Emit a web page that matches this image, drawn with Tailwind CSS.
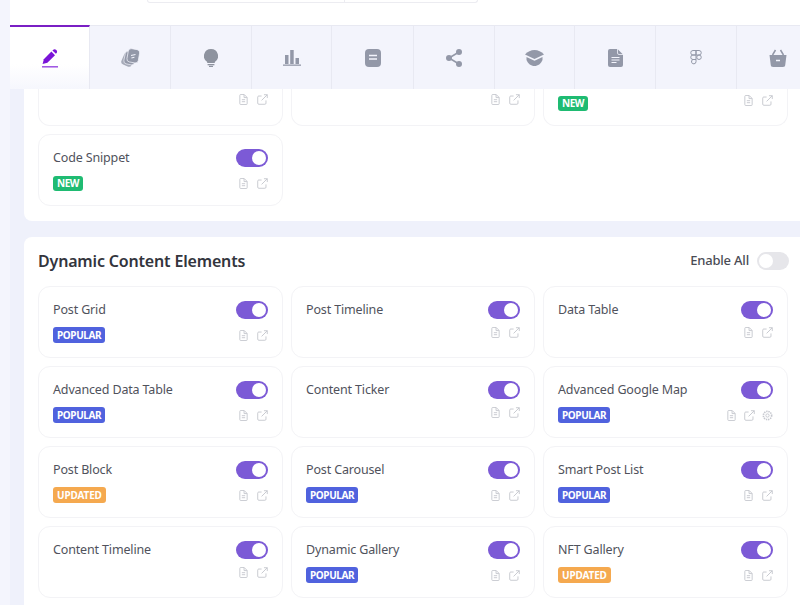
<!DOCTYPE html>
<html lang="en">
<head>
<meta charset="UTF-8">
<title>Elements</title>
<script src="https://cdn.jsdelivr.net/npm/@tailwindcss/browser@4"></script>
</head>
<body class="w-[800px] h-[605px] overflow-hidden bg-[#f4f5fd] font-['Noto_Sans',sans-serif]">
<svg class="hidden">
  <symbol id="doc" viewBox="0 0 12 12"><path d="M2 1.500a1 1 0 0 1 1-1h3.700L10 3.800V10.500a1 1 0 0 1-1 1H3a1 1 0 0 1-1-1z M6.600 .8V3.900H9.800 M4.200 6.200h3.600 M4.200 8.400h3.600" fill="none" stroke="currentColor" stroke-width="1"/></symbol>
  <symbol id="ext" viewBox="0 0 12 12"><path d="M9.800 7v3a1.200 1.200 0 0 1-1.200 1.200H2A1.200 1.200 0 0 1 .8 10V3.400A1.200 1.200 0 0 1 2 2.200h3 M5 7 11.200.8 M7.600.8h3.600v3.600" fill="none" stroke="currentColor" stroke-width="1"/></symbol>
</svg>
<div class="ml-[10px] w-[790px] h-[605px] bg-[#eff1fb] overflow-hidden">
  <!-- top bar -->
  <div class="h-[25px] bg-white">
    <div class="ml-[137px] w-[331px] h-[3px] border border-t-0 border-[#ececf1] rounded-b-lg flex">
      <div class="w-[197px] border-r border-[#ececf1]"></div>
    </div>
  </div>
  <!-- tabs -->
  <div class="flex h-[64px] w-[810px] bg-[#f3f4fc] border-t border-[#e8e9f2] text-[#9398a8]">
    <div class="w-[80px] shrink-0 flex items-center justify-center -mt-[1px] border-t-2 border-[#7a1fc4] bg-gradient-to-b from-white from-60% to-[#f6f7fd] border-r border-r-[#e8e9f2] text-[#7a14d8]">
      <svg width="16" height="19" viewBox="0 0 16 19" fill="currentColor"><path d="M.6 15 1.800 10.200 9.400 2.600 13 6.200 5.400 13.800z"/><path d="M10.400 1.600 11 1c1-1 2.300-1 3.300 0s1.100 2.300.1 3.300l-.5.500z"/><rect x="0" y="17.300" width="16" height="1.100"/></svg>
    </div>
    <div class="w-[81px] shrink-0 flex items-center justify-center border-r border-[#e8e9f2]">
      <svg width="19" height="19" viewBox="0 0 19 19"><rect x="1.500" y="5" width="11" height="13" rx="3" transform="rotate(24 7 11.500)" fill="currentColor" opacity=".8"/><rect x="3.500" y="3.500" width="11" height="13" rx="3" transform="rotate(12 9 10)" fill="currentColor" opacity=".9" stroke="#f3f4fc" stroke-width=".7"/><rect x="6.500" y="1" width="11.500" height="13.500" rx="3" transform="rotate(10 12 8)" fill="currentColor" stroke="#f3f4fc" stroke-width=".7"/><path d="M10 7.500l4.500-1M10.400 10l3-.7" stroke="#f3f4fc" stroke-width="1.100" fill="none"/></svg>
    </div>
    <div class="w-[81px] shrink-0 flex items-center justify-center border-r border-[#e8e9f2]">
      <svg width="14" height="18" viewBox="0 0 14 18" fill="#8e939f"><path d="M7 0a7 7 0 0 1 3.800 12.900V14H3.200v-1.100A7 7 0 0 1 7 0z"/><rect x="3.600" y="15" width="6.800" height="1.300"/><rect x="5" y="16.800" width="4" height="1.200"/></svg>
    </div>
    <div class="w-[80px] shrink-0 flex items-center justify-center border-r border-[#e8e9f2]">
      <svg width="18" height="17" viewBox="0 0 18 17" fill="currentColor"><rect x="2" y="6" width="3.500" height="9"/><rect x="7.200" y="1" width="3.500" height="14"/><rect x="12.500" y="9" width="3.500" height="6"/><rect x="0" y="15.500" width="18" height="1.300"/></svg>
    </div>
    <div class="w-[82px] shrink-0 flex items-center justify-center border-r border-[#e8e9f2]">
      <svg width="16" height="18" viewBox="0 0 16 18"><rect width="16" height="18" rx="4" fill="currentColor"/><path d="M4 6.500h8M4 10h8" stroke="#f3f4fc" stroke-width="1.400"/></svg>
    </div>
    <div class="w-[81px] shrink-0 flex items-center justify-center border-r border-[#e8e9f2]">
      <svg width="16" height="18" viewBox="0 0 16 18" fill="currentColor"><circle cx="13" cy="3" r="3"/><circle cx="3" cy="9" r="3"/><circle cx="13" cy="15" r="3"/><path d="M13 3 3 9l10 6" fill="none" stroke="currentColor" stroke-width="1.600"/></svg>
    </div>
    <div class="w-[80px] shrink-0 flex items-center justify-center border-r border-[#e8e9f2]">
      <svg width="19" height="16" viewBox="0 0 19 16" fill="currentColor"><path d="M9.500 0C13 0 16.500 1.500 19 4.500L9.500 9 0 4.500C2.500 1.500 6 0 9.500 0z"/><path d="M1.500 7l8 3.800 8-3.800v3C16 13.800 13 16 9.500 16S3 13.800 1.500 10z"/></svg>
    </div>
    <div class="w-[81px] shrink-0 flex items-center justify-center border-r border-[#e8e9f2]">
      <svg width="15" height="18" viewBox="0 0 15 18"><path d="M2 0h7.500L15 5.500V16a2 2 0 0 1-2 2H2a2 2 0 0 1-2-2V2a2 2 0 0 1 2-2z" fill="currentColor"/><path d="M9.500 0v4a1.500 1.500 0 0 0 1.500 1.500h4" fill="none" stroke="#f3f4fc" stroke-width=".8"/><path d="M3.500 8.500h8M3.500 11h8M3.500 13.500h5" stroke="#f3f4fc" stroke-width="1.200"/></svg>
    </div>
    <div class="w-[81px] shrink-0 flex items-center justify-center border-r border-[#e8e9f2]">
      <svg width="12" height="15" viewBox="0 0 12 15" fill="none" stroke="currentColor" stroke-width="1"><path d="M6 .5H3a2.250 2.250 0 0 0 0 4.500h3z"/><path d="M6 .5h3A2.250 2.250 0 0 1 9 5H6z"/><path d="M6 5H3a2.250 2.250 0 0 0 0 4.500h3z"/><circle cx="9" cy="7.250" r="2.250"/><path d="M6 9.500H3A2.250 2.250 0 1 0 6 11.700z"/></svg>
    </div>
    <div class="w-[81px] shrink-0 flex items-center justify-center">
      <svg width="18" height="18" viewBox="0 0 18 18"><path d="M.5 6h17l-1.200 9.500A2.500 2.500 0 0 1 13.800 18H4.200a2.500 2.500 0 0 1-2.500-2.500z" fill="currentColor"/><path d="M3.500 6 6.500 1M14.500 6 11.500 1" fill="none" stroke="currentColor" stroke-width="1.500"/><path d="M7 11.500h4" stroke="#f3f4fc" stroke-width="1.500"/></svg>
    </div>
  </div>

  <!-- first panel, scrolled under the tabs -->
  <div class="ml-[14px] w-[790px] bg-white rounded-bl-lg px-[14px] pb-[15px]">
    <div class="grid grid-cols-[245px_244px_245px] gap-2">
      <div class="h-[37px] border border-t-0 border-[#f3f3f6] rounded-b-xl px-[14px] pt-[5px] flex justify-end gap-[8px] text-[#c5c7ce]">
        <svg class="size-[11px]"><use href="#doc"/></svg><svg class="size-[11px]"><use href="#ext"/></svg>
      </div>
      <div class="h-[37px] border border-t-0 border-[#f3f3f6] rounded-b-xl px-[14px] pt-[5px] flex justify-end gap-[8px] text-[#c5c7ce]">
        <svg class="size-[11px]"><use href="#doc"/></svg><svg class="size-[11px]"><use href="#ext"/></svg>
      </div>
      <div class="h-[37px] border border-t-0 border-[#f3f3f6] rounded-b-xl px-[14px] pt-[5px] flex justify-between gap-[8px] text-[#c5c7ce]">
        <span class="self-start mt-[2px] rounded-[3px] bg-[#1fbb72] text-white text-[10px] tracking-[-0.5px] leading-[15px] font-bold px-[4px]">NEW</span>
        <div class="flex gap-[8px] mt-[1px]"><svg class="size-[11px]"><use href="#doc"/></svg><svg class="size-[11px]"><use href="#ext"/></svg></div>
      </div>
      <div class="h-[72px] border border-[#f3f3f6] rounded-xl px-[14px] pt-[14px]">
        <div class="flex justify-between items-center h-[18px]">
          <span class="text-[12.5px] tracking-[-0.15px] mt-[1px] text-[#50525c]">Code Snippet</span>
          <div class="w-[32px] h-[18px] rounded-full bg-[#7c5ad6] p-[2px] flex justify-end"><div class="size-[14px] rounded-full bg-white"></div></div>
        </div>
        <div class="flex justify-between items-center mt-[9px]">
          <span class="rounded-[3px] bg-[#1fbb72] text-white text-[10px] tracking-[-0.5px] leading-[15px] font-bold px-[4px]">NEW</span>
          <div class="flex gap-[8px] text-[#c5c7ce]"><svg class="size-[11px]"><use href="#doc"/></svg><svg class="size-[11px]"><use href="#ext"/></svg></div>
        </div>
      </div>
    </div>
  </div>

  <!-- second panel -->
  <div class="mt-[16px] ml-[14px] w-[790px] h-[400px] bg-white rounded-tl-lg px-[14px]">
    <div class="flex justify-between items-center h-[48px] mb-[1px] w-[751px]">
      <h2 class="text-[16px] tracking-[-0.17px] font-semibold text-[#33353d]">Dynamic Content Elements</h2>
      <div class="flex items-center gap-[8px]">
        <span class="text-[13px] tracking-[-0.2px] font-medium text-[#4a4c55]">Enable All</span>
        <div class="w-[32px] h-[18px] rounded-full bg-[#e6e6ea] p-[2px]"><div class="size-[14px] rounded-full bg-white"></div></div>
      </div>
    </div>
    <div class="grid grid-cols-[245px_244px_245px] gap-2 auto-rows-[72px]">

      <div class="border border-[#f3f3f6] rounded-xl px-[14px] pt-[14px]">
        <div class="flex justify-between items-center h-[18px]"><span class="text-[12.5px] tracking-[-0.15px] text-[#50525c]">Post Grid</span><div class="w-[32px] h-[18px] rounded-full bg-[#7c5ad6] p-[2px] flex justify-end"><div class="size-[14px] rounded-full bg-white"></div></div></div>
        <div class="flex justify-between items-center mt-[8px] h-[16px]"><span class="rounded-[3px] bg-[#5062de] text-white text-[10px] tracking-[-0.4px] leading-[16px] font-bold px-[4px]">POPULAR</span><div class="ml-auto flex gap-[8px] text-[#c5c7ce]"><svg class="size-[11px]"><use href="#doc"/></svg><svg class="size-[11px]"><use href="#ext"/></svg></div></div>
      </div>
      <div class="border border-[#f3f3f6] rounded-xl px-[14px] pt-[14px]">
        <div class="flex justify-between items-center h-[18px]"><span class="text-[12.5px] tracking-[-0.15px] text-[#50525c]">Post Timeline</span><div class="w-[32px] h-[18px] rounded-full bg-[#7c5ad6] p-[2px] flex justify-end"><div class="size-[14px] rounded-full bg-white"></div></div></div>
        <div class="flex justify-between items-center mt-[5px] h-[16px]"><div class="ml-auto flex gap-[8px] text-[#c5c7ce]"><svg class="size-[11px]"><use href="#doc"/></svg><svg class="size-[11px]"><use href="#ext"/></svg></div></div>
      </div>
      <div class="border border-[#f3f3f6] rounded-xl px-[14px] pt-[14px]">
        <div class="flex justify-between items-center h-[18px]"><span class="text-[12.5px] tracking-[-0.15px] text-[#50525c]">Data Table</span><div class="w-[32px] h-[18px] rounded-full bg-[#7c5ad6] p-[2px] flex justify-end"><div class="size-[14px] rounded-full bg-white"></div></div></div>
        <div class="flex justify-between items-center mt-[5px] h-[16px]"><div class="ml-auto flex gap-[8px] text-[#c5c7ce]"><svg class="size-[11px]"><use href="#doc"/></svg><svg class="size-[11px]"><use href="#ext"/></svg></div></div>
      </div>

      <div class="border border-[#f3f3f6] rounded-xl px-[14px] pt-[14px]">
        <div class="flex justify-between items-center h-[18px]"><span class="text-[12.5px] tracking-[-0.15px] text-[#50525c]">Advanced Data Table</span><div class="w-[32px] h-[18px] rounded-full bg-[#7c5ad6] p-[2px] flex justify-end"><div class="size-[14px] rounded-full bg-white"></div></div></div>
        <div class="flex justify-between items-center mt-[8px] h-[16px]"><span class="rounded-[3px] bg-[#5062de] text-white text-[10px] tracking-[-0.4px] leading-[16px] font-bold px-[4px]">POPULAR</span><div class="ml-auto flex gap-[8px] text-[#c5c7ce]"><svg class="size-[11px]"><use href="#doc"/></svg><svg class="size-[11px]"><use href="#ext"/></svg></div></div>
      </div>
      <div class="border border-[#f3f3f6] rounded-xl px-[14px] pt-[14px]">
        <div class="flex justify-between items-center h-[18px]"><span class="text-[12.5px] tracking-[-0.15px] text-[#50525c]">Content Ticker</span><div class="w-[32px] h-[18px] rounded-full bg-[#7c5ad6] p-[2px] flex justify-end"><div class="size-[14px] rounded-full bg-white"></div></div></div>
        <div class="flex justify-between items-center mt-[5px] h-[16px]"><div class="ml-auto flex gap-[8px] text-[#c5c7ce]"><svg class="size-[11px]"><use href="#doc"/></svg><svg class="size-[11px]"><use href="#ext"/></svg></div></div>
      </div>
      <div class="border border-[#f3f3f6] rounded-xl px-[14px] pt-[14px]">
        <div class="flex justify-between items-center h-[18px]"><span class="text-[12.5px] tracking-[-0.15px] text-[#50525c]">Advanced Google Map</span><div class="w-[32px] h-[18px] rounded-full bg-[#7c5ad6] p-[2px] flex justify-end"><div class="size-[14px] rounded-full bg-white"></div></div></div>
        <div class="flex justify-between items-center mt-[8px] h-[16px]"><span class="rounded-[3px] bg-[#5062de] text-white text-[10px] tracking-[-0.4px] leading-[16px] font-bold px-[4px]">POPULAR</span><div class="ml-auto flex gap-[7px] text-[#c5c7ce]"><svg class="size-[11px]"><use href="#doc"/></svg><svg class="size-[11px]"><use href="#ext"/></svg><svg class="size-[11px]" viewBox="0 0 12 12" fill="none" stroke="currentColor"><circle cx="6" cy="6" r="1.800"/><circle cx="6" cy="6" r="4.500" stroke-width="1.800" stroke-dasharray="1.500 .9"/></svg></div></div>
      </div>

      <div class="border border-[#f3f3f6] rounded-xl px-[14px] pt-[14px]">
        <div class="flex justify-between items-center h-[18px]"><span class="text-[12.5px] tracking-[-0.15px] text-[#50525c]">Post Block</span><div class="w-[32px] h-[18px] rounded-full bg-[#7c5ad6] p-[2px] flex justify-end"><div class="size-[14px] rounded-full bg-white"></div></div></div>
        <div class="flex justify-between items-center mt-[8px] h-[16px]"><span class="rounded-[3px] bg-[#f5a94f] text-white text-[10px] tracking-[-0.15px] leading-[16px] font-bold px-[4px]">UPDATED</span><div class="ml-auto flex gap-[8px] text-[#c5c7ce]"><svg class="size-[11px]"><use href="#doc"/></svg><svg class="size-[11px]"><use href="#ext"/></svg></div></div>
      </div>
      <div class="border border-[#f3f3f6] rounded-xl px-[14px] pt-[14px]">
        <div class="flex justify-between items-center h-[18px]"><span class="text-[12.5px] tracking-[-0.15px] text-[#50525c]">Post Carousel</span><div class="w-[32px] h-[18px] rounded-full bg-[#7c5ad6] p-[2px] flex justify-end"><div class="size-[14px] rounded-full bg-white"></div></div></div>
        <div class="flex justify-between items-center mt-[8px] h-[16px]"><span class="rounded-[3px] bg-[#5062de] text-white text-[10px] tracking-[-0.4px] leading-[16px] font-bold px-[4px]">POPULAR</span><div class="ml-auto flex gap-[8px] text-[#c5c7ce]"><svg class="size-[11px]"><use href="#doc"/></svg><svg class="size-[11px]"><use href="#ext"/></svg></div></div>
      </div>
      <div class="border border-[#f3f3f6] rounded-xl px-[14px] pt-[14px]">
        <div class="flex justify-between items-center h-[18px]"><span class="text-[12.5px] tracking-[-0.15px] text-[#50525c]">Smart Post List</span><div class="w-[32px] h-[18px] rounded-full bg-[#7c5ad6] p-[2px] flex justify-end"><div class="size-[14px] rounded-full bg-white"></div></div></div>
        <div class="flex justify-between items-center mt-[8px] h-[16px]"><span class="rounded-[3px] bg-[#5062de] text-white text-[10px] tracking-[-0.4px] leading-[16px] font-bold px-[4px]">POPULAR</span><div class="ml-auto flex gap-[8px] text-[#c5c7ce]"><svg class="size-[11px]"><use href="#doc"/></svg><svg class="size-[11px]"><use href="#ext"/></svg></div></div>
      </div>

      <div class="border border-[#f3f3f6] rounded-xl px-[14px] pt-[14px]">
        <div class="flex justify-between items-center h-[18px]"><span class="text-[12.5px] tracking-[-0.15px] text-[#50525c]">Content Timeline</span><div class="w-[32px] h-[18px] rounded-full bg-[#7c5ad6] p-[2px] flex justify-end"><div class="size-[14px] rounded-full bg-white"></div></div></div>
        <div class="flex justify-between items-center mt-[5px] h-[16px]"><div class="ml-auto flex gap-[8px] text-[#c5c7ce]"><svg class="size-[11px]"><use href="#doc"/></svg><svg class="size-[11px]"><use href="#ext"/></svg></div></div>
      </div>
      <div class="border border-[#f3f3f6] rounded-xl px-[14px] pt-[14px]">
        <div class="flex justify-between items-center h-[18px]"><span class="text-[12.5px] tracking-[-0.15px] text-[#50525c]">Dynamic Gallery</span><div class="w-[32px] h-[18px] rounded-full bg-[#7c5ad6] p-[2px] flex justify-end"><div class="size-[14px] rounded-full bg-white"></div></div></div>
        <div class="flex justify-between items-center mt-[8px] h-[16px]"><span class="rounded-[3px] bg-[#5062de] text-white text-[10px] tracking-[-0.4px] leading-[16px] font-bold px-[4px]">POPULAR</span><div class="ml-auto flex gap-[8px] text-[#c5c7ce]"><svg class="size-[11px]"><use href="#doc"/></svg><svg class="size-[11px]"><use href="#ext"/></svg></div></div>
      </div>
      <div class="border border-[#f3f3f6] rounded-xl px-[14px] pt-[14px]">
        <div class="flex justify-between items-center h-[18px]"><span class="text-[12.5px] tracking-[-0.15px] text-[#50525c]">NFT Gallery</span><div class="w-[32px] h-[18px] rounded-full bg-[#7c5ad6] p-[2px] flex justify-end"><div class="size-[14px] rounded-full bg-white"></div></div></div>
        <div class="flex justify-between items-center mt-[8px] h-[16px]"><span class="rounded-[3px] bg-[#f5a94f] text-white text-[10px] tracking-[-0.15px] leading-[16px] font-bold px-[4px]">UPDATED</span><div class="ml-auto flex gap-[8px] text-[#c5c7ce]"><svg class="size-[11px]"><use href="#doc"/></svg><svg class="size-[11px]"><use href="#ext"/></svg></div></div>
      </div>

    </div>
  </div>
</div>
</body>
</html>
